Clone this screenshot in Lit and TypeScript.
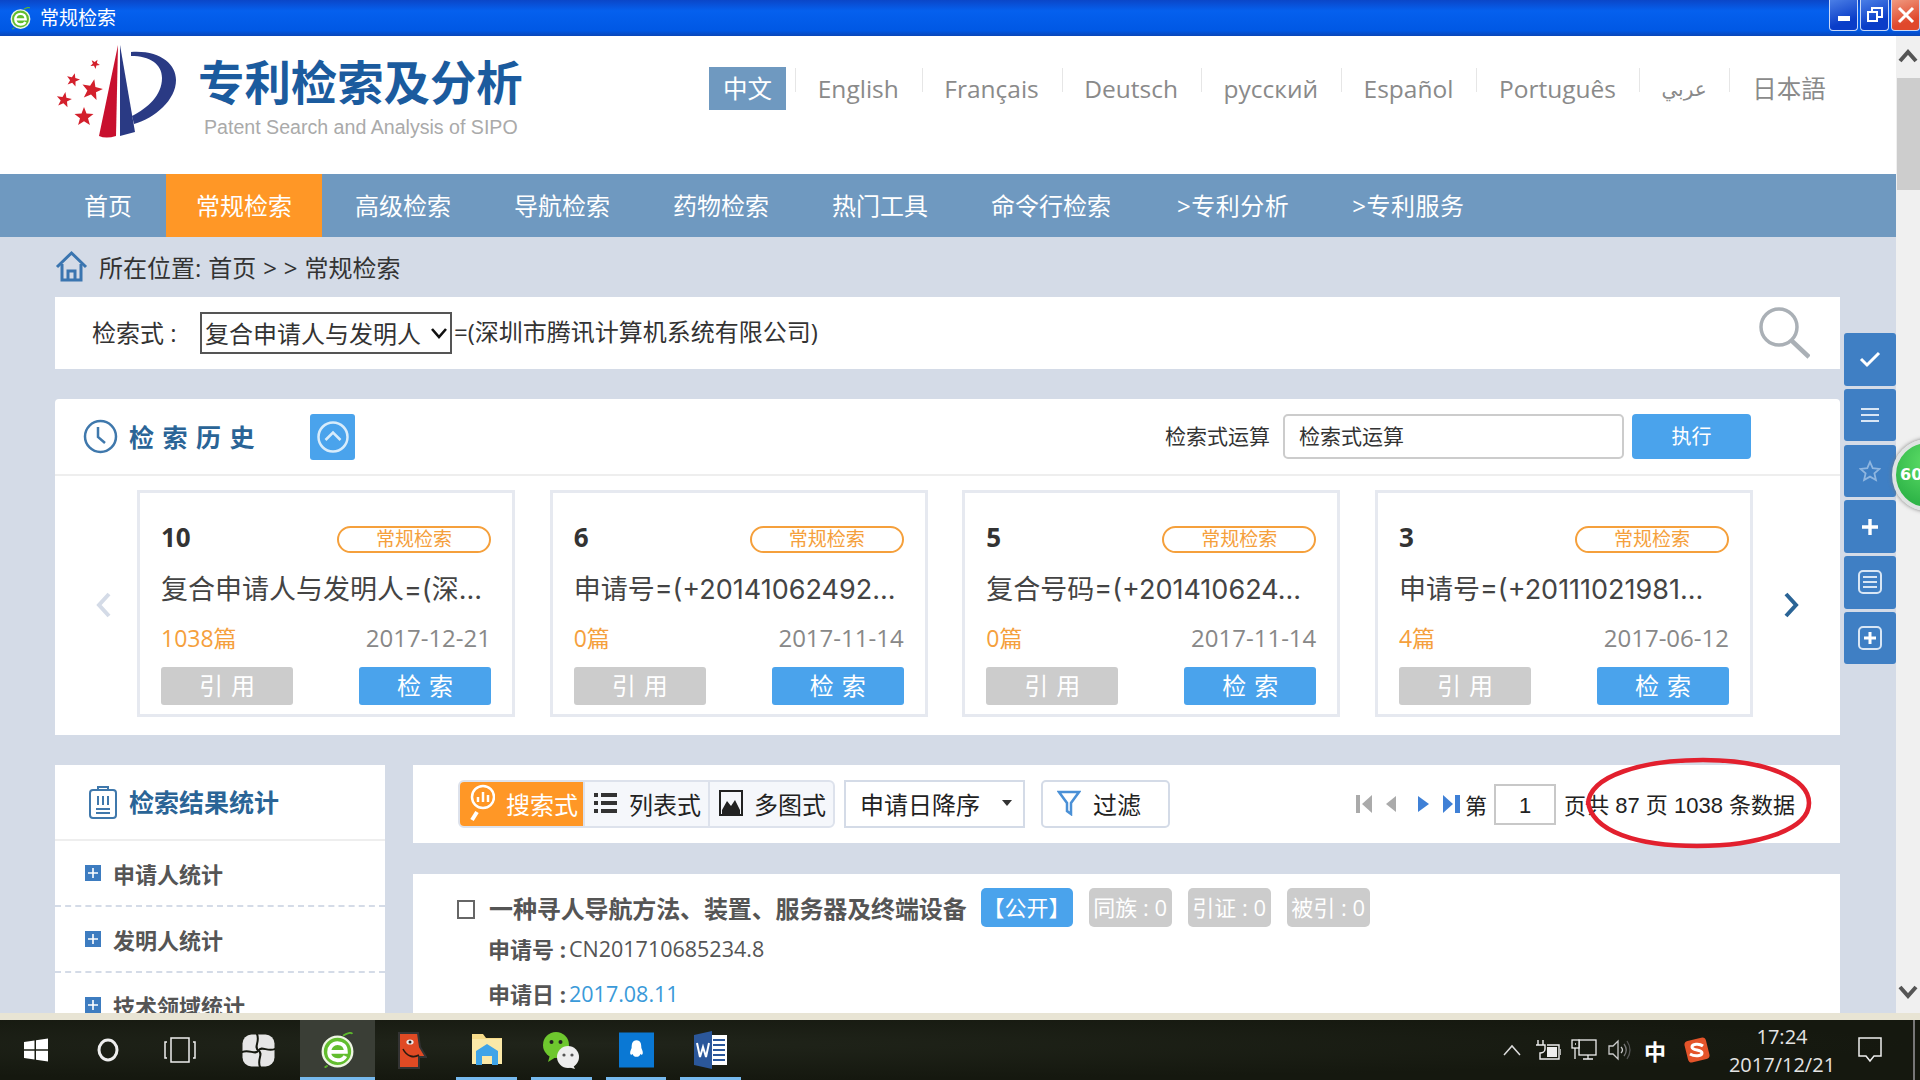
import { LitElement, html, css, svg } from "lit";
import { customElement } from "lit/decorators.js";

const star = (cx: number, cy: number, r: number, rot = 0) => {
  const pts: string[] = [];
  for (let i = 0; i < 10; i++) {
    const rad = i % 2 ? r * 0.42 : r;
    const a = ((-90 + rot + i * 36) * Math.PI) / 180;
    pts.push(`${(cx + rad * Math.cos(a)).toFixed(1)},${(cy + rad * Math.sin(a)).toFixed(1)}`);
  }
  return svg`<polygon points=${pts.join(" ")} fill="#d3202c"/>`;
};

const LANGS = ["English", "Français", "Deutsch", "русский", "Español", "Português", "عربي", "日本語"];
const NAV = ["首页", "常规检索", "高级检索", "导航检索", "药物检索", "热门工具", "命令行检索", ">专利分析", ">专利服务"];
const CARDS = [
  { n: "10", q: "复合申请人与发明人=(深...", c: "1038篇", d: "2017-12-21" },
  { n: "6", q: "申请号=(+20141062492...", c: "0篇", d: "2017-11-14" },
  { n: "5", q: "复合号码=(+201410624...", c: "0篇", d: "2017-11-14" },
  { n: "3", q: "申请号=(+20111021981...", c: "4篇", d: "2017-06-12" },
];

@customElement("app-root")
export class AppRoot extends LitElement {
  static styles = css`
    :host {
      display: flex;
      flex-direction: column;
      width: 1920px;
      height: 1080px;
      overflow: hidden;
      position: relative;
      background: #d4dbe7;
      font-family: "Open Sans", "Noto Sans CJK SC", sans-serif;
      color: #333;
    }
    svg { display: block; flex: none; }
    .titlebar {
      height: 36px; flex: none; display: flex; align-items: flex-start;
      background: linear-gradient(180deg, #0b46c8 0%, #0560ee 30%, #0058e4 85%, #0a46b8 100%);
      color: #fff; font-size: 19px; line-height: 36px;
    }
    .t-icon { margin: 7px 8px 0 9px; }
    .t-btns { margin-left: auto; display: flex; gap: 2px; }
    .t-btn {
      width: 29px; height: 31px; border: 1px solid #c8d8f8; border-top: none; border-radius: 0 0 4px 4px;
      box-sizing: border-box; display: flex; align-items: center; justify-content: center;
      background: linear-gradient(160deg, #4a7ee6, #0a3dc8 70%);
    }
    .t-btn.close { background: linear-gradient(160deg, #f09a80, #e0482c 70%); }
    .body { flex: 1; min-height: 0; display: flex; }
    .col { width: 1896px; flex: none; display: flex; flex-direction: column; min-height: 0; background: #d4dbe7; }
    .scroll { width: 24px; flex: none; background: #f0f0f0; display: flex; flex-direction: column; align-items: center; }
    .scroll .up { height: 42px; padding-top: 12px; box-sizing: border-box; }
    .thumb { width: 23px; height: 112px; background: #cdcdcd; margin-left: 1px; }
    .scroll .down { margin-top: auto; padding-bottom: 13px; }

    .header { height: 138px; flex: none; background: #fff; display: flex; align-items: flex-start; }
    .logo { margin: 4px 0 0 50px; }
    .brand { margin: 17px 0 0 18px; width: 511px; }
    .brand .zh { font-size: 46.4px; font-weight: 700; line-height: 58px; color: #1b5b9e; white-space: nowrap; }
    .brand .en { font-family: "Liberation Sans", sans-serif; font-size: 19.6px; line-height: 24px; color: #aaa; margin: 4px 0 0 6px; }
    .langs { display: flex; align-items: center; margin-top: 31px; height: 43px; font-size: 24.5px; color: #8a8a8a; }
    .lang-on { background: #6f99c0; color: #fff; width: 77px; height: 43px; line-height: 43px; text-align: center; margin-right: 9px; }
    .lang { padding: 0 22.75px; line-height: 30px; position: relative; white-space: nowrap; }
    .lang:first-of-type { padding-left: 23.2px; }
    .lang::before { content: ""; position: absolute; left: 0; top: -6px; height: 24px; width: 1px; background: #e6e6e6; }
    .lang.ar { font-family: "DejaVu Sans", sans-serif; font-size: 20px; }

    .nav { height: 63px; flex: none; background: #6f99c0; display: flex; padding-left: 54px; gap: 3px; }
    .nav div { padding: 0 30px; line-height: 63px; font-size: 24px; color: #fff; white-space: nowrap; }
    .nav .on { background: #ff9726; margin-left: 1px; }
    .nav .more { letter-spacing: 0.5px; }
    .nav .shift { margin-left: 3px; }

    .main { flex: 1; min-height: 0; display: flex; }
    .content { width: 1785px; margin: 0 4px 0 55px; display: flex; flex-direction: column; min-height: 0; overflow: hidden; flex: none; }
    .rail { width: 52px; flex: none; padding-top: 96px; display: flex; flex-direction: column; gap: 3.3px; position: relative; }
    .rail-btn { height: 52.5px; background: #3f7fc4; border-radius: 3px; display: flex; align-items: center; justify-content: center; }
    .ball {
      position: absolute; left: 48px; top: 202px; width: 64px; height: 64px; border-radius: 50%;
      border: 4px solid #dfe3e2; box-shadow: 0 0 4px #777;
      background: radial-gradient(circle at 50% 30%, #5ede68, #2fb548 75%);
      color: #fff; font-weight: 700; font-size: 16px; line-height: 64px; z-index: 3;
      text-indent: 4px; font-family: "DejaVu Sans", sans-serif;
    }

    .crumb { height: 60px; flex: none; display: flex; align-items: center; gap: 11px; font-size: 24px; color: #333; }
    .crumb span { margin-bottom: 2px; word-spacing: 0.7px; }
    .searchbar { height: 72px; flex: none; background: #fff; display: flex; align-items: center; padding-left: 37px; font-size: 24px; color: #333; }
    .searchbar .lbl { width: 108px; margin-bottom: 3px; }
    .sel { position: relative; margin-right: 2px; flex: none; height: 42px; }
    .searchbar select {
      display: block; appearance: none; -webkit-appearance: none;
      width: 252px; height: 42px; font: inherit; color: #333; border: 2px solid #555; background: #fff;
      border-radius: 0; padding: 0 0 0 3px; margin: 0;
    }
    .sel-caret { position: absolute; right: 4px; top: 14px; pointer-events: none; }
    .searchbar .f { margin-bottom: 6px; }
    .searchbar .mag { margin: 0 30px 0 auto; }

    .history { flex: none; margin-top: 30px; height: 336px; background: #fff; border-radius: 4px 4px 0 0; }
    .h-head { height: 75px; border-bottom: 2px solid #eee; display: flex; align-items: center; padding-left: 28px; }
    .h-title { font-size: 25px; font-weight: 700; letter-spacing: 8.5px; color: #2a6496; margin: 0 0 2px 11px; width: 181px; }
    .h-toggle { width: 45px; height: 46px; background: #4aa3ec; border-radius: 3px; display: flex; align-items: center; justify-content: center; }
    .h-right { margin-left: auto; display: flex; align-items: center; margin-right: 89px; font-size: 21px; }
    .h-right > span { margin-bottom: 3px; }
    .h-input { width: 341px; height: 45px; box-sizing: border-box; border: 2px solid #ccc; border-radius: 5px; line-height: 40px; padding-left: 14px; margin-left: 13px; color: #333; }
    .h-btn { width: 119px; height: 45px; line-height: 45px; text-align: center; background: #4aa3ec; border-radius: 4px; color: #fff; margin-left: 8px; font-size: 20px; }
    .h-cards { display: flex; align-items: center; margin-top: 14px; height: 227px; }
    .arrow-l { width: 82px; padding: 2px 0 0 40px; box-sizing: border-box; flex: none; }
    .arrow-r { padding: 2px 0 0 31px; flex: none; }
    .cards { display: grid; grid-template-columns: repeat(4, 378px); column-gap: 34.67px; }
    .card { height: 227px; box-sizing: border-box; border: 3px solid #e6e9f0; padding: 27px 21px 0; display: flex; flex-direction: column; }
    .c-top { height: 34px; display: flex; align-items: center; justify-content: space-between; }
    .c-num { font-size: 26px; font-weight: 700; color: #333; }
    .c-badge { width: 154px; height: 27px; box-sizing: border-box; border: 2px solid #f5a03c; border-radius: 14px; color: #f5a03c; font-size: 19px; line-height: 23px; text-align: center; margin-top: 4px; }
    .c-q { height: 40px; line-height: 40px; margin-top: 16px; font-family: Inter, "Noto Sans CJK SC", sans-serif; font-size: 27px; color: #444; white-space: nowrap; }
    .c-meta { height: 36px; margin-top: 9px; display: flex; align-items: center; justify-content: space-between; font-size: 23px; }
    .c-meta .cnt { color: #f5a03c; }
    .c-meta .dt { color: #888; font-size: 24px; }
    .c-btns { margin-top: 12px; display: flex; justify-content: space-between; }
    .c-btn { width: 132px; height: 38px; line-height: 38px; border-radius: 3px; text-align: center; color: #fff; font-size: 24px; letter-spacing: 8px; text-indent: 8px; }
    .c-btn.g { background: #ccc; }
    .c-btn.b { background: #4aa3ec; }

    .lower { flex: none; display: flex; gap: 28px; margin-top: 30px; align-items: flex-start; }
    .stats { width: 330px; flex: none; background: #fff; height: 300px; }
    .s-head { height: 74px; border-bottom: 2px solid #eee; display: flex; align-items: center; padding-left: 33px; gap: 11px; }
    .s-title { font-size: 25px; font-weight: 700; color: #2a6496; margin-bottom: 2px; }
    .s-item { height: 64px; border-bottom: 2px dashed #d4dbe7; display: flex; align-items: center; padding-left: 30px; gap: 12px; font-size: 22px; font-weight: 700; color: #555; }
    .s-plus { width: 16px; height: 16px; background: #3d7cc0; display: flex; align-items: center; justify-content: center; flex: none; }

    .results { width: 1427px; flex: none; }
    .toolbar { height: 78px; background: #fff; display: flex; align-items: center; padding-left: 45px; position: relative; font-size: 24px; color: #222; }
    .segs { display: flex; width: 377px; height: 48px; box-sizing: border-box; border: 2px solid #dde2ec; border-radius: 6px; background: #f5f7fb; overflow: hidden; flex: none; }
    .seg { flex: 1; display: flex; align-items: center; gap: 11px; padding: 0 0 2px 9px; border-left: 2px solid #dde2ec; white-space: nowrap; }
    .seg:first-child { border-left: none; background: #ff9726; color: #fff; }
    .t-select { margin-left: 9px; width: 181px; height: 48px; box-sizing: border-box; border: 2px solid #d4dbe7; display: flex; align-items: center; padding: 0 0 2px 14px; position: relative; flex: none; }
    .t-select .caret { margin-left: auto; margin-right: 10px; }
    .t-filter { margin-left: 16px; width: 129px; height: 48px; box-sizing: border-box; border: 2px solid #d4dbe7; border-radius: 5px; display: flex; align-items: center; padding: 0 0 2px 14px; gap: 12px; flex: none; }
    .pager { margin-left: auto; margin-right: 45px; display: flex; align-items: center; font-size: 22px; color: #222; white-space: nowrap; font-family: "Liberation Sans", "Noto Sans CJK SC", sans-serif; }
    .pager .pi { margin-right: 11px; }
    .pager .pi.wide { margin-right: 17px; }
    .pager .pl { margin-right: 3px; }
    .pager .num { width: 62px; height: 41px; box-sizing: border-box; border: 2px solid #c8c8c8; line-height: 40px; text-align: center; margin: 0 8px 0 7px; }
    .pager .tot { margin: 0 0 2px 1px; }
    .ellipse { position: absolute; left: 1172px; top: -7px; pointer-events: none; overflow: visible; z-index: 2; }

    .result { margin-top: 31px; height: 200px; background: #fff; padding: 14px 0 0 44px; box-sizing: border-box; }
    .r-title { height: 39px; display: flex; align-items: center; }
    .r-check { width: 18px; height: 19px; box-sizing: border-box; border: 2px solid #666; margin: 3px 14px 0 0; flex: none; }
    .r-name { font-size: 24px; letter-spacing: -0.12px; font-weight: 700; color: #555; white-space: nowrap; margin-right: 14px; }
    .tag { height: 39px; line-height: 39px; border-radius: 5px; color: #fff; text-align: center; font-size: 22px; width: 83px; margin-right: 16px; background: #ccc; white-space: nowrap; }
    .tag.pub { width: 92px; background: #4aa3ec; }
    .r-row { height: 30px; line-height: 30px; font-size: 21.5px; margin-left: 31px; color: #555; white-space: nowrap; display: flex; }
    .r-row b { color: #555; font-size: 22px; margin-right: 3px; }
    .r-row.a { margin-top: 7px; }
    .r-row.b { margin-top: 15px; }
    .r-row .blue { color: #3a9ad9; }

    .strip { height: 7px; flex: none; background: #e8e4d4; }
    .taskbar { height: 60px; flex: none; display: flex; background: radial-gradient(ellipse at 30% 40%, #20241a, #15180f 70%); color: #ddd; }
    .tb-s { width: 72px; height: 60px; display: flex; align-items: center; justify-content: center; flex: none; position: relative; }
    .tb-app { width: 74.7px; }
    .tb-app.run::after { content: ""; position: absolute; left: 7px; right: 7px; bottom: 0; height: 3px; background: #76b9ed; }
    .tb-app.act { background: #3a3e36; }
    .tb-app.act::after { left: 0; right: 0; }
    .tb-pin { width: 84px; }
    .tray { margin-left: auto; display: flex; height: 60px; align-items: center; }
    .tr { width: 36px; display: flex; justify-content: center; align-items: center; flex: none; }
    .tr.ime { width: 34px; font-size: 22px; font-weight: 700; color: #fff; }
    .tr.sg { width: 50px; }
    .clock { width: 120px; text-align: center; font-size: 20px; line-height: 28px; color: #e4e4e4; padding-top: 2px; white-space: nowrap; }
    .tr.notif { width: 56px; }
    .endbar { width: 22px; height: 60px; box-sizing: border-box; position: relative; }
    .endbar::after { content: ""; position: absolute; left: 15px; top: 0; bottom: 0; width: 2px; background: #777; }
  `;

  private ieIcon(size: number) {
    return html`<svg width=${size} height=${size} viewBox="0 0 40 40">
      <circle cx="20" cy="21" r="16" fill="#62bd2e" stroke="#eef6e4" stroke-width="2.5"/>
      <path d="M11 21.5 H29 C29 15 25 12 20 12 C15 12 11 16 11 21.5 C11 27 15 30.5 20 30.5 C24 30.5 27 29 28.5 26" fill="none" stroke="#fff" stroke-width="4.2"/>
      <path d="M8 37 C10 36 7 38 6 38 M26 4 C30 1 35 0 36 2" fill="none" stroke="#5cb82c" stroke-width="2"/>
    </svg>`;
  }

  private pinwheel() {
    const gap = "M16.5 16.5 C11 13 19 7 14.5 -1";
    return html`<svg width="33" height="33" viewBox="0 0 33 33">
      <rect x="0.5" y="0.5" width="32" height="32" rx="9" fill="#e6e6e6"/>
      ${[0, 90, 180, 270].map((r) => svg`<path d=${gap} fill="none" stroke="#15180f" stroke-width="2" transform="rotate(${r} 16.5 16.5)"/>`)}
    </svg>`;
  }

  private navClass(n: string) {
    if (n === "常规检索") return "on";
    if (n === ">专利分析") return "more shift";
    if (n === ">专利服务") return "more";
    return "";
  }

  render() {
    return html`
      <div class="titlebar">
        <div class="t-icon">${this.ieIcon(23)}</div>
        <span>常规检索</span>
        <div class="t-btns">
          <div class="t-btn"><svg width="14" height="14" viewBox="0 0 14 14"><rect x="1" y="8" width="12" height="5" fill="#fff"/></svg></div>
          <div class="t-btn"><svg width="18" height="18" viewBox="0 0 18 18" fill="none" stroke="#fff" stroke-width="2"><rect x="2" y="6" width="9" height="9"/><path d="M6 5V2H16V11H12"/></svg></div>
          <div class="t-btn close"><svg width="18" height="18" viewBox="0 0 18 18" stroke="#fff" stroke-width="3"><path d="M2 2L16 16M16 2L2 16"/></svg></div>
        </div>
      </div>
      <div class="body">
        <div class="col">
          <div class="header">
            <svg class="logo logo-svg" width="130" height="104" viewBox="50 40 130 104">
              ${star(95, 64, 5, 30)}${star(73, 80, 7, 15)}${star(92, 90, 11, 12)}${star(64, 100, 8, 10)}${star(84, 117, 10, 0)}
              <path d="M118 45 L99 136 Q106 139 116 136 Z" fill="#c8102e"/>
              <path d="M120 45 L120 136 L135 132 Z" fill="#2a3a84"/>
              <path d="M131 52 C160 50 176 64 176 80 C176 100 155 118 134 124 L132 116 C148 108 162 95 162 78 C162 64 150 56 131 56 Z" fill="#2a3a84"/>
            </svg>
            <div class="brand">
              <div class="zh">专利检索及分析</div>
              <div class="en">Patent Search and Analysis of SIPO</div>
            </div>
            <div class="langs">
              <div class="lang-on">中文</div>
              ${LANGS.map((l) => html`<div class="lang ${l === "عربي" ? "ar" : ""}">${l}</div>`)}
            </div>
          </div>
          <div class="nav">
            ${NAV.map((n) => html`<div class=${this.navClass(n)}>${n}</div>`)}
          </div>
          <div class="main">
            <div class="content">
              <div class="crumb">
                <svg width="33" height="37" viewBox="0 0 33 37" fill="none" stroke="#3a75b0" stroke-width="3"><path d="M2 18 L16.5 4 L31 18"/><path d="M7 15 V31 H26 V15"/><path d="M13 31 V22 H20 V31"/></svg>
                <span>所在位置: 首页 &gt; &gt; 常规检索</span>
              </div>
              <div class="searchbar">
                <span class="lbl">检索式 :</span>
                <div class="sel">
                  <select><option>复合申请人与发明人</option></select>
                  <svg class="sel-caret" width="18" height="14" viewBox="0 0 18 14" fill="none" stroke="#111" stroke-width="2.6"><path d="M2 3 L9 11 L16 3"/></svg>
                </div>
                <span class="f">=(深圳市腾讯计算机系统有限公司)</span>
                <svg class="mag" width="52" height="52" viewBox="0 0 52 52" fill="none" stroke="#aab0b6"><circle cx="21" cy="20" r="18" stroke-width="3.5"/><path d="M34 34 L51 50" stroke-width="4.5"/></svg>
              </div>
              <div class="history">
                <div class="h-head">
                  <svg width="35" height="35" viewBox="0 0 35 35" fill="none" stroke="#3f78ac" stroke-width="2.5"><circle cx="17.5" cy="17.5" r="15.5"/><path d="M15 8 V18 L22 24"/></svg>
                  <div class="h-title">检索历史</div>
                  <div class="h-toggle"><svg width="34" height="34" viewBox="0 0 34 34" fill="none" stroke="#d8ecfb" stroke-width="2.5"><circle cx="17" cy="17" r="14.5"/><path d="M9.5 20 L17 12.5 L24.5 20"/></svg></div>
                  <div class="h-right">
                    <span>检索式运算</span>
                    <div class="h-input">检索式运算</div>
                    <div class="h-btn">执行</div>
                  </div>
                </div>
                <div class="h-cards">
                  <div class="arrow-l"><svg width="16" height="26" viewBox="0 0 16 26" fill="none" stroke="#d4dbe7" stroke-width="4"><path d="M14 2 L4 13 L14 24"/></svg></div>
                  <div class="cards">
                    ${CARDS.map((c) => html`
                      <div class="card">
                        <div class="c-top"><span class="c-num">${c.n}</span><span class="c-badge">常规检索</span></div>
                        <div class="c-q">${c.q}</div>
                        <div class="c-meta"><span class="cnt">${c.c}</span><span class="dt">${c.d}</span></div>
                        <div class="c-btns"><div class="c-btn g">引用</div><div class="c-btn b">检索</div></div>
                      </div>`)}
                  </div>
                  <div class="arrow-r"><svg width="16" height="26" viewBox="0 0 16 26" fill="none" stroke="#2a6496" stroke-width="4"><path d="M2 2 L12 13 L2 24"/></svg></div>
                </div>
              </div>
              <div class="lower">
                <div class="stats">
                  <div class="s-head">
                    <svg width="30" height="36" viewBox="0 0 30 36" fill="none" stroke="#3f78ac" stroke-width="2"><rect x="2" y="6" width="26" height="28" rx="3"/><path d="M10 6 V3 H20 V6"/><path d="M10 12 V21 M15 12 V21 M20 12 V21 M8 25 H22 M8 29 H22"/></svg>
                    <span class="s-title">检索结果统计</span>
                  </div>
                  ${["申请人统计", "发明人统计", "技术领域统计"].map((s) => html`
                    <div class="s-item"><span class="s-plus"><svg width="10" height="10" viewBox="0 0 10 10" stroke="#fff" stroke-width="1.6"><path d="M5 0V10M0 5H10"/></svg></span>${s}</div>`)}
                </div>
                <div class="results">
                  <div class="toolbar">
                    <div class="segs">
                      <div class="seg">
                        <svg width="26" height="38" viewBox="0 0 26 38" fill="none" stroke="#fff" stroke-width="2.5"><circle cx="14" cy="13" r="11"/><path d="M8 28 L3 36" stroke-width="4"/><path d="M9 18V13M14 18V8M19 18V11" stroke-width="2.5"/></svg>
                        搜索式
                      </div>
                      <div class="seg">
                        <svg width="24" height="24" viewBox="0 0 24 24" fill="#333"><rect x="0" y="2" width="4" height="4"/><rect x="7" y="2" width="16" height="4"/><rect x="0" y="10" width="4" height="4"/><rect x="7" y="10" width="16" height="4"/><rect x="0" y="18" width="4" height="4"/><rect x="7" y="18" width="16" height="4"/></svg>
                        列表式
                      </div>
                      <div class="seg">
                        <svg width="24" height="26" viewBox="0 0 24 26"><rect x="1" y="1" width="22" height="24" fill="none" stroke="#222" stroke-width="2"/><path d="M3 20 L8 11 L12 16 L16 10 L21 20 V24 H3 Z" fill="#222"/></svg>
                        多图式
                      </div>
                    </div>
                    <div class="t-select">申请日降序<svg class="caret" width="12" height="8" viewBox="0 0 12 8"><path d="M1 1 H11 L6 7 Z" fill="#333"/></svg></div>
                    <div class="t-filter">
                      <svg width="24" height="26" viewBox="0 0 24 26" fill="none" stroke="#4a90d6" stroke-width="2.5"><path d="M2 2 H22 L14 13 V24 L10 21 V13 Z"/></svg>
                      过滤
                    </div>
                    <div class="pager">
                      <svg class="pi" width="17" height="20" viewBox="0 0 17 20"><rect x="0" y="1" width="4" height="18" fill="#aaa"/><path d="M16 1 V19 L6 10 Z" fill="#aaa"/></svg>
                      <svg class="pi wide" width="14" height="20" viewBox="0 0 14 20"><path d="M12 2 V18 L2 10 Z" fill="#aaa"/></svg>
                      <svg class="pi" width="16" height="20" viewBox="0 0 16 20"><path d="M3 2 V18 L14 10 Z" fill="#3f80d6"/></svg>
                      <svg class="pl" width="20" height="20" viewBox="0 0 20 20"><path d="M1 1 V19 L11 10 Z" fill="#3f80d6"/><rect x="13" y="1" width="5" height="18" fill="#3f80d6"/></svg>
                      <span>第</span>
                      <span class="num">1</span>
                      <span>页</span>
                      <span class="tot">共 87 页 1038 条数据</span>
                    </div>
                    <svg class="ellipse" width="226" height="90" viewBox="0 0 226 90" fill="none"><path d="M3 47 C3 17 60 2 118 2 C180 2 224 20 224 45 C224 72 172 88 112 88 C54 88 6 74 3 43" stroke="#e2202e" stroke-width="4.6"/></svg>
                  </div>
                  <div class="result">
                    <div class="r-title">
                      <span class="r-check"></span>
                      <span class="r-name">一种寻人导航方法、装置、服务器及终端设备</span>
                      <span class="tag pub">【公开】</span>
                      <span class="tag">同族 : 0</span>
                      <span class="tag">引证 : 0</span>
                      <span class="tag">被引 : 0</span>
                    </div>
                    <div class="r-row a"><b>申请号 :</b><span>CN201710685234.8</span></div>
                    <div class="r-row b"><b>申请日 :</b><span class="blue">2017.08.11</span></div>
                  </div>
                </div>
              </div>
            </div>
            <div class="rail">
              <div class="rail-btn"><svg width="22" height="18" viewBox="0 0 22 18" fill="none" stroke="#fff" stroke-width="3"><path d="M2 9 L8 15 L20 3"/></svg></div>
              <div class="rail-btn"><svg width="18" height="16" viewBox="0 0 18 16" stroke="#d8e6f5" stroke-width="2"><path d="M0 2H18M0 8H18M0 14H18"/></svg></div>
              <div class="rail-btn"><svg width="22" height="22" viewBox="0 0 22 22" fill="none" stroke="#8fb6e0" stroke-width="1.8"><path d="M11 2 L13.7 8.2 L20.5 8.9 L15.4 13.4 L16.9 20 L11 16.6 L5.1 20 L6.6 13.4 L1.5 8.9 L8.3 8.2 Z"/></svg></div>
              <div class="rail-btn"><svg width="16" height="16" viewBox="0 0 16 16" stroke="#fff" stroke-width="3.4"><path d="M8 0V16M0 8H16"/></svg></div>
              <div class="rail-btn"><svg width="24" height="24" viewBox="0 0 24 24" fill="none" stroke="#d8e6f5" stroke-width="2"><rect x="1" y="1" width="22" height="22" rx="4"/><path d="M5 7H19M5 12H19M5 17H19"/></svg></div>
              <div class="rail-btn"><svg width="24" height="24" viewBox="0 0 24 24" fill="none" stroke="#d8e6f5" stroke-width="2"><rect x="1" y="1" width="22" height="22" rx="4"/><path d="M12 6V18M6 12H18" stroke="#fff" stroke-width="3"/></svg></div>
              <div class="ball">60</div>
            </div>
          </div>
        </div>
        <div class="scroll">
          <div class="up"><svg width="20" height="15" viewBox="0 0 20 15" fill="none" stroke="#555" stroke-width="4"><path d="M2 13 L10 4 L18 13"/></svg></div>
          <div class="thumb"></div>
          <div class="down"><svg width="20" height="15" viewBox="0 0 20 15" fill="none" stroke="#555" stroke-width="4"><path d="M2 2 L10 11 L18 2"/></svg></div>
        </div>
      </div>
      <div class="strip"></div>
      <div class="taskbar">
        <div class="tb-s"><svg width="24" height="24" viewBox="0 0 24 24" fill="#fff"><path d="M0 4 L10.5 2.5 V11.3 H0 Z M12 2.3 L24 0.5 V11.3 H12 Z M0 12.8 H10.5 V21.6 L0 20 Z M12 12.8 H24 V23.6 L12 21.8 Z"/></svg></div>
        <div class="tb-s"><svg width="24" height="26" viewBox="0 0 24 26" fill="none" stroke="#eee" stroke-width="3"><ellipse cx="12" cy="13" rx="9" ry="10"/></svg></div>
        <div class="tb-s"><svg width="32" height="26" viewBox="0 0 32 26" fill="none" stroke="#eee" stroke-width="1.5"><rect x="7" y="1" width="18" height="24"/><path d="M3 5H1V21H3M29 5H31V21H29"/></svg></div>
        <div class="tb-s tb-pin">${this.pinwheel()}</div>
        <div class="tb-s tb-app act run">${this.ieIcon(37)}</div>
        <div class="tb-s tb-app"><svg width="30" height="37" viewBox="0 0 30 37"><path d="M2 1 H21 L23 15 L29 25 H22 V36 H2 Z" fill="#e04a24" stroke="#333" stroke-width="2"/><ellipse cx="13" cy="10" rx="3.6" ry="2.6" fill="#eee"/><circle cx="13" cy="10" r="1.5" fill="#222"/><path d="M6 17 C10 25 17 26 22 23" fill="none" stroke="#2a1a10" stroke-width="1.6"/></svg></div>
        <div class="tb-s tb-app run"><svg width="32" height="38" viewBox="0 0 32 38"><path d="M1 3 H12 L15 7 H31 V33 H1 Z" fill="#f7dc8a"/><rect x="1" y="8" width="30" height="25" fill="#fbe9a8"/><path d="M5 34 V20 L16 13 L27 20 V34 H21 V25 H11 V34 Z" fill="#3fa4e8"/></svg></div>
        <div class="tb-s tb-app run"><svg width="38" height="40" viewBox="0 0 38 40"><circle cx="14" cy="15" r="13" fill="#6ec72e"/><path d="M8 25 L6 32 L14 27 Z" fill="#6ec72e"/><circle cx="9.5" cy="12" r="2" fill="#222"/><circle cx="18.5" cy="12" r="2" fill="#222"/><circle cx="26" cy="27" r="11" fill="#eee"/><path d="M31 35 L33 39 L26 37 Z" fill="#eee"/><circle cx="22" cy="25" r="1.6" fill="#555"/><circle cx="30" cy="25" r="1.6" fill="#555"/></svg></div>
        <div class="tb-s tb-app run"><svg width="35" height="36" viewBox="0 0 36 36"><rect width="36" height="36" fill="#0a78d4"/><path d="M18 8 C13.5 8 13 12 13 16 C11 20 11 23 13 23 L14 22 C15 26 21 26 22 22 L23 23 C25 23 25 20 23 16 C23 12 22.5 8 18 8 Z" fill="#fff"/></svg></div>
        <div class="tb-s tb-app run"><svg width="34" height="38" viewBox="0 0 34 38"><rect x="16" y="4" width="17" height="30" fill="#fff"/><path d="M19 9H31M19 14H31M19 19H31M19 24H31M19 29H31" stroke="#2b579a" stroke-width="1.8"/><path d="M0 4 L18 0 V38 L0 34 Z" fill="#2b579a"/><path d="M3 12 L6 26 L9 16 L12 26 L15 12" fill="none" stroke="#fff" stroke-width="2"/></svg></div>
        <div class="tray">
          <div class="tr"><svg width="20" height="12" viewBox="0 0 20 12" fill="none" stroke="#ddd" stroke-width="1.5"><path d="M2 11 L10 2 L18 11"/></svg></div>
          <div class="tr"><svg width="26" height="20" viewBox="0 0 26 20" fill="none" stroke="#eee" stroke-width="1.4"><path d="M3 0V5M8 0V5M1 5H10V9C10 12 7 13 5 13V19H24V5H12" /><rect x="12" y="7" width="10" height="10" fill="#eee" stroke="none"/><path d="M26 9V15"/></svg></div>
          <div class="tr"><svg width="26" height="22" viewBox="0 0 26 22" fill="none" stroke="#eee" stroke-width="1.3"><rect x="8" y="1" width="17" height="15"/><rect x="1" y="1" width="7" height="8" fill="#15180f"/><path d="M4 9V20M12 20H22M17 16V20M4 5H5"/></svg></div>
          <div class="tr"><svg width="24" height="22" viewBox="0 0 24 22" fill="none" stroke="#ccc" stroke-width="1.3"><path d="M1 7H5L10 2V20L5 15H1Z"/><path d="M13 8C15 10 15 12 13 14" /><path d="M16 5C19 9 19 13 16 17" stroke="#777"/><path d="M19 2C23 8 23 14 19 20" stroke="#555"/></svg></div>
          <div class="tr ime">中</div>
          <div class="tr sg"><svg width="26" height="26" viewBox="0 0 26 26"><rect x="2" y="2" width="22" height="22" rx="4" fill="#e4542a" transform="rotate(-14 13 13)"/><path d="M19 9 C15 6 8 7 8 10 C8 14 18 12 18 16 C18 19 11 20 6 17" fill="none" stroke="#fff" stroke-width="3"/></svg></div>
          <div class="clock">17:24<br />2017/12/21</div>
          <div class="tr notif"><svg width="24" height="26" viewBox="0 0 24 26" fill="none" stroke="#eee" stroke-width="1.5"><path d="M1 1H23V19H16L12 24L8 19H1Z"/></svg></div>
          <div class="endbar"></div>
        </div>
      </div>
    `;
  }
}
